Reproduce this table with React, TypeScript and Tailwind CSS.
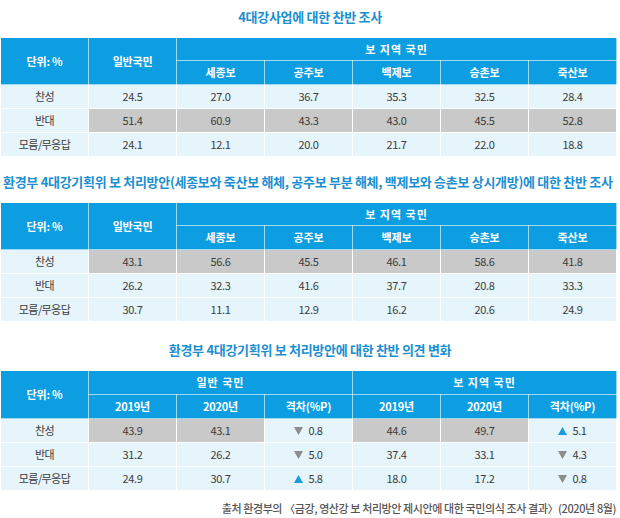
import React from "react";

type Cell = { v: string; gray?: boolean; tri?: "up" | "down" };

const FONT = { fontFamily: '"Noto Sans CJK KR", "Noto Sans", sans-serif' };

function Tri({ dir }: { dir: "up" | "down" }) {
  return (
    <svg width="9" height="8" viewBox="0 0 9 8" className="inline-block mr-[5px] align-[0px]">
      {dir === "up" ? (
        <path d="M4.5 0 L9 8 L0 8 Z" fill="#1a9be0" />
      ) : (
        <path d="M0 0 L9 0 L4.5 8 Z" fill="#8c8c8c" />
      )}
    </svg>
  );
}

function Title({ children, className }: { children: React.ReactNode; className?: string }) {
  return (
    <h2 className={"h-[20px] leading-[20px] text-center text-[13px] font-bold text-[#1b8fd2] tracking-[-0.3px] whitespace-nowrap " + (className ?? "")}>
      {children}
    </h2>
  );
}

function DataRow({ label, cells }: { label: string; cells: Cell[] }) {
  return (
    <tr className="h-[24px]">
      <td className="border border-white bg-[#e6f4fc] text-center text-[11px] text-[#3b3b3b] tracking-[-0.6px]">{label}</td>
      {cells.map((c, i) => (
        <td
          key={i}
          className={
            "border border-white text-center text-[11px] text-[#3b3b3b] tracking-[-0.4px] " +
            (c.gray ? "bg-[#c9c9c9]" : "bg-[#e6f4fc]")
          }
        >
          {c.tri && <Tri dir={c.tri} />}
          {c.v}
        </td>
      ))}
    </tr>
  );
}

const head = "border border-white/60 bg-[#0d9de1] text-center text-[11px] font-bold text-white tracking-[-0.2px]";

function Cols() {
  return (
    <colgroup>
      {[0, 1, 2, 3, 4, 5, 6].map((i) => (
        <col key={i} className="w-[88px]" />
      ))}
    </colgroup>
  );
}

const g = (v: string): Cell => ({ v, gray: true });
const n = (v: string): Cell => ({ v });

const boList = ["세종보", "공주보", "백제보", "승촌보", "죽산보"];

function RegionTable({ rows }: { rows: { label: string; cells: Cell[] }[] }) {
  return (
    <table className="table-fixed w-[616px] border-collapse">
      <Cols />
      <thead>
        <tr className="h-[23px]">
          <th rowSpan={2} className={head}>단위: %</th>
          <th rowSpan={2} className={head}>일반국민</th>
          <th colSpan={5} className={head + " tracking-[1px]"}>보 지역 국민</th>
        </tr>
        <tr className="h-[24px]">
          {boList.map((b) => (
            <th key={b} className={head}>{b}</th>
          ))}
        </tr>
      </thead>
      <tbody>
        {rows.map((r) => (
          <DataRow key={r.label} label={r.label} cells={r.cells} />
        ))}
      </tbody>
    </table>
  );
}

export default function App() {
  return (
    <div className="w-[620px] h-[518px] bg-white pt-[7px] overflow-hidden" style={FONT}>
      <Title>4대강사업에 대한 찬반 조사</Title>
      <div className="mt-[10px]">
        <RegionTable
          rows={[
            { label: "찬성", cells: ["24.5", "27.0", "36.7", "35.3", "32.5", "28.4"].map(n) },
            { label: "반대", cells: ["51.4", "60.9", "43.3", "43.0", "45.5", "52.8"].map(g) },
            { label: "모름/무응답", cells: ["24.1", "12.1", "20.0", "21.7", "22.0", "18.8"].map(n) },
          ]}
        />
      </div>

      <Title className="mt-[15px] text-left pl-[3px]">
        환경부 4대강기획위 보 처리방안(세종보와 죽산보 해체, 공주보 부분 해체, 백제보와 승촌보 상시개방)에 대한 찬반 조사
      </Title>
      <div className="mt-[10px]">
        <RegionTable
          rows={[
            { label: "찬성", cells: ["43.1", "56.6", "45.5", "46.1", "58.6", "41.8"].map(g) },
            { label: "반대", cells: ["26.2", "32.3", "41.6", "37.7", "20.8", "33.3"].map(n) },
            { label: "모름/무응답", cells: ["30.7", "11.1", "12.9", "16.2", "20.6", "24.9"].map(n) },
          ]}
        />
      </div>

      <Title className="mt-[18px]">환경부 4대강기획위 보 처리방안에 대한 찬반 의견 변화</Title>
      <div className="mt-[10px]">
        <table className="table-fixed w-[616px] border-collapse">
          <Cols />
          <thead>
            <tr className="h-[24px]">
              <th rowSpan={2} className={head}>단위: %</th>
              <th colSpan={3} className={head + " tracking-[1px]"}>일반 국민</th>
              <th colSpan={3} className={head + " tracking-[1px]"}>보 지역 국민</th>
            </tr>
            <tr className="h-[24px]">
              {["2019년", "2020년", "격차(%P)", "2019년", "2020년", "격차(%P)"].map((h, i) => (
                <th key={i} className={head}>{h}</th>
              ))}
            </tr>
          </thead>
          <tbody>
            <DataRow
              label="찬성"
              cells={[g("43.9"), g("43.1"), { v: "0.8", tri: "down" }, g("44.6"), g("49.7"), { v: "5.1", tri: "up" }]}
            />
            <DataRow
              label="반대"
              cells={[n("31.2"), n("26.2"), { v: "5.0", tri: "down" }, n("37.4"), n("33.1"), { v: "4.3", tri: "down" }]}
            />
            <DataRow
              label="모름/무응답"
              cells={[n("24.9"), n("30.7"), { v: "5.8", tri: "up" }, n("18.0"), n("17.2"), { v: "0.8", tri: "down" }]}
            />
          </tbody>
        </table>
      </div>

      <p className="mt-[9px] w-[616px] text-right text-[11px] leading-[16px] font-medium text-[#555] tracking-[-0.4px]">
        출처 환경부의 〈금강, 영산강 보 처리방안 제시안에 대한 국민의식 조사 결과〉(2020년 8월)
      </p>
    </div>
  );
}
